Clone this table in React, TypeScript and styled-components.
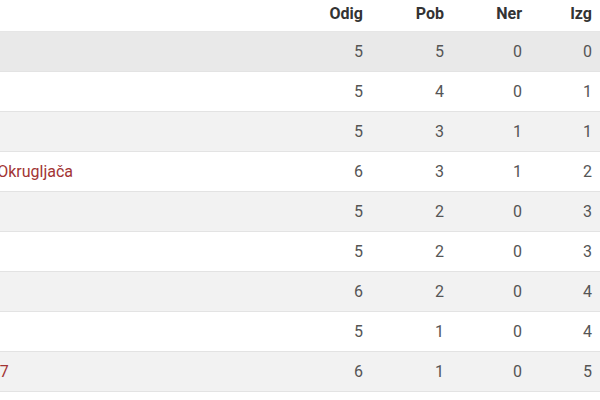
import React from "react";
import styled, { createGlobalStyle } from "styled-components";

const Global = createGlobalStyle`
  html, body { margin: 0; padding: 0; background: #fff; }
  body { font-family: Roboto, "Liberation Sans", sans-serif; }
`;

const Viewport = styled.div`
  width: 600px;
  height: 400px;
  overflow: hidden;
  background: #fff;
`;

const Table = styled.div`
  margin-left: -123px;
  width: 723px;
  display: grid;
  grid-template-columns: 1fr 80px 81px 78px 70px;
`;

const HeadCell = styled.div<{ $left?: boolean }>`
  height: 32px;
  box-sizing: border-box;
  padding: 4px 8px 0 8px;
  text-align: ${(p) => (p.$left ? "left" : "right")};
  font-size: 16px;
  font-weight: 700;
  color: #333;
  border-bottom: 1px solid #e6e6e6;
  line-height: 19px;
`;

const Row = styled.div<{ $shade: "none" | "light" | "dark" }>`
  display: contents;
  & > div {
    background: ${(p) =>
      p.$shade === "dark" ? "#e9e9e9" : p.$shade === "light" ? "#f2f2f2" : "#fff"};
  }
`;

const Cell = styled.div`
  height: 40px;
  box-sizing: border-box;
  padding: 0 8px;
  display: flex;
  align-items: center;
  justify-content: flex-end;
  font-size: 16px;
  color: #555;
  border-bottom: 1px solid #e3e3e3;
  white-space: nowrap;
`;

const NameCell = styled(Cell)`
  justify-content: flex-start;
`;

const TeamLink = styled.a`
  color: #a23434;
  text-decoration: none;
`;

const rows: [string, number, number, number, number][] = [
  ["NK Croatia", 5, 5, 0, 0],
  ["NK Sloga", 5, 4, 0, 1],
  ["NK Graničar", 5, 3, 1, 1],
  ["NK Mladost Sv. Okrugljača", 6, 3, 1, 2],
  ["NK Hajduk", 5, 2, 0, 3],
  ["NK Dinamo", 5, 2, 0, 3],
  ["NK Tomislav", 6, 2, 0, 4],
  ["NK Bratstvo", 5, 1, 0, 4],
  ["NK Sloboda 1937", 6, 1, 0, 5],
];

export default function App() {
  return (
    <Viewport>
      <Global />
      <Table>
        <HeadCell $left>Klub</HeadCell>
        <HeadCell>Odig</HeadCell>
        <HeadCell>Pob</HeadCell>
        <HeadCell>Ner</HeadCell>
        <HeadCell>Izg</HeadCell>
        {rows.map((r, i) => (
          <Row key={i} $shade={i === 0 ? "dark" : i % 2 === 0 ? "light" : "none"}>
            <NameCell>
              <TeamLink href="#">{r[0]}</TeamLink>
            </NameCell>
            <Cell>{r[1]}</Cell>
            <Cell>{r[2]}</Cell>
            <Cell>{r[3]}</Cell>
            <Cell>{r[4]}</Cell>
          </Row>
        ))}
      </Table>
    </Viewport>
  );
}
